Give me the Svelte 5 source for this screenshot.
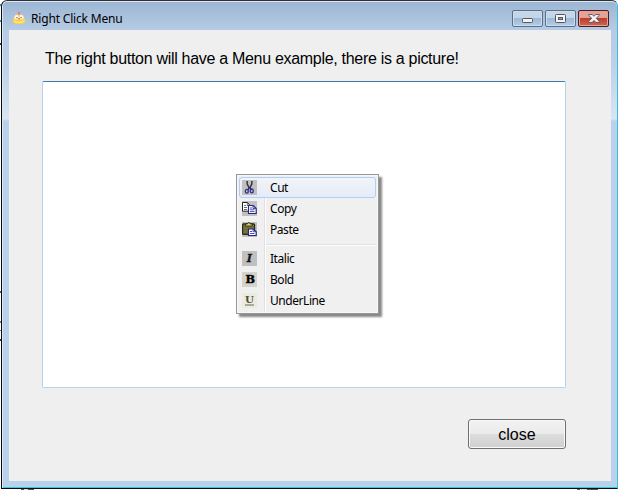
<script>
  const groups = [
    [{ label: 'Cut', icon: 'cut' }, { label: 'Copy', icon: 'copy' }, { label: 'Paste', icon: 'paste' }],
    [{ label: 'Italic', icon: 'italic' }, { label: 'Bold', icon: 'bold' }, { label: 'UnderLine', icon: 'underline' }]
  ];
  let selected = $state('Cut');
</script>

<div class="desktop">
  <div class="window">
    <header>
      <svg class="logo" width="14" height="14" viewBox="0 0 14 14">
        <path d="M.8 10C-.2 7 2 5.4 3 5C3.6 2 5.2 2.5 7 2.5S10.4 2 11 5C12 5.4 14.2 7 13.2 10Q12 12 7 12T.8 10Z" fill="#fbd052" />
        <path d="M2 8.5Q7 11 12 8.5Q12 11 7 11T2 8.5Z" fill="#ffed7c" />
        <ellipse cx="4.5" cy="5.3" rx="2.1" ry="2.3" fill="#fff8e8" />
        <ellipse cx="9.5" cy="5.3" rx="2.1" ry="2.3" fill="#fff8e8" />
        <path d="M4.3 5h1.2v1.2h-1.2zM8.5 5h1.2v1.2h-1.2z" fill="#8b6660" />
        <path d="M6.3 0h1.4v2.5h-1.4zM6 6h2l-1 2z" fill="#ef654c" />
      </svg>
      <h1>Right Click Menu</h1>
      <div class="controls">
        <button class="control" aria-label="Minimize">
          <svg class="minimize" width="11" height="5" viewBox="0 0 11 5"><rect x=".5" y=".5" width="10" height="4" rx=".8" fill="#f2f2f2" stroke="#535666" /></svg>
        </button>
        <button class="control" aria-label="Maximize">
          <svg width="11" height="9" viewBox="0 0 11 9"><rect x=".5" y=".5" width="10" height="8" rx=".8" fill="#f4f4f4" stroke="#535666" /><rect x="3.5" y="3.5" width="4" height="2" fill="#8eabc8" stroke="#535666" /></svg>
        </button>
        <button class="control exit" aria-label="Close">
          <svg width="12" height="9" viewBox="0 0 12 10" preserveAspectRatio="none"><path d="M.7.6h3.5L6 2.5 7.8.6h3.5v1L8.2 4.8l3.1 3.5v1H7.8L6 7.2 4.2 9.3H.7v-1l3.1-3.5L.7 1.6z" fill="#f5f5f5" stroke="#535666" /></svg>
        </button>
      </div>
    </header>
    <main>
      <p>The right button will have a Menu example, there is a picture!</p>
      <section class="canvas">
        <div class="menu" role="menu">
          {#each groups as group, i}
            {#if i > 0}<div class="separator"></div>{/if}
            {#each group as item}
              <button class="item" class:active={selected === item.label} role="menuitem" onclick={() => (selected = item.label)}>
                <svg class="icon" width="15" height="15" viewBox="0 0 15 15">
                  {#if item.icon === 'cut'}
                    <path d="M0 0h15v15H0z" fill="#c0c0c0" />
                    <path d="M5.2 1v3l2.3 4.5M9.8 1v3L7.5 8.5" fill="none" stroke="#373737" stroke-width="1.5" />
                    <path d="M7.5 7L6 10M7.5 7l2 3" stroke="#302e8c" stroke-width="1.6" />
                    <ellipse cx="4.8" cy="11.2" rx="1.5" ry="1.9" fill="none" stroke="#302e8c" stroke-width="1.3" />
                    <ellipse cx="9.8" cy="10.9" rx="1.5" ry="1.9" fill="none" stroke="#302e8c" stroke-width="1.3" />
                  {:else if item.icon === 'copy'}
                    <path d="M0 0h15v15H0z" fill="#c0c0c0" />
                    <path d="M.5 1.5h5l2.5 3v5.7H.5z" fill="#fff" stroke="#222" />
                    <path d="M5.3 1.5v3H8M2 4.5h2M2 6.5h3M2 8.5h3" fill="none" stroke="#444" stroke-width=".8" />
                    <path d="M6.5 4.5h4.7l3 3v5h-7.7z" fill="#fff" stroke="#26248a" stroke-width="1.2" />
                    <path d="M11 4.5v3h3M8 7h2M8 8.8h4.5M8 10.6h4.5" fill="none" stroke="#3f3d95" stroke-width=".9" />
                  {:else if item.icon === 'paste'}
                    <path d="M0 0h15v15H0z" fill="#c0c0c0" />
                    <rect x=".6" y="1.9" width="12" height="10.5" rx="1" fill="#71703e" stroke="#24240f" stroke-width="1.1" />
                    <path d="M3.5 4v-2h2L6 .7h1.6l.6 1.3h2v2z" fill="#ddd46b" stroke="#24240f" stroke-width=".8" />
                    <path d="M6.5 7h4.7l3 2.7v3.8h-7.7z" fill="#fff" stroke="#26248a" stroke-width="1.2" />
                    <path d="M11 7v2.7h3M8 9.5h2M8 11.5h4.5" fill="none" stroke="#3f3d95" stroke-width=".9" />
                  {:else if item.icon === 'italic'}
                    <path d="M0 0h15v15H0z" fill="#c0c0c0" />
                    <text x="4.7" y="11.2" font-style="italic" font-size="11" fill="#161616" stroke="#161616" stroke-width=".3">I</text>
                  {:else if item.icon === 'bold'}
                    <path d="M0 0h15v15H0z" fill="#d4d4ca" />
                    <text x="3.4" y="11.2" font-size="11" textLength="9.5" lengthAdjust="spacingAndGlyphs" stroke="#111" stroke-width=".5">B</text>
                  {:else}
                    <path d="M0 0h15v15H0z" fill="#ecebdc" />
                    <text x="3" y="10.2" font-size="10" textLength="9" lengthAdjust="spacingAndGlyphs" fill="#4b4b43">U</text>
                    <path d="M3 12h9" stroke="#68685f" />
                  {/if}
                </svg>
                <span>{item.label}</span>
              </button>
            {/each}
          {/each}
        </div>
      </section>
      <footer><button class="close">close</button></footer>
    </main>
  </div>
</div>

<style>
  :global(body) { margin: 0; overflow: hidden; }
  * { box-sizing: border-box; }
  button { margin: 0; padding: 0; font: inherit; color: #000; }
  .desktop {
    width: 618px; height: 490px; padding: 0 0 1px 1px;
    background:
      linear-gradient(90deg, transparent 21px, #555 21px 24px, #ddd 24px 28px, #555 28px 34px, transparent 34px 577px, #666 577px 580px, #ddd 580px 587px, #555 587px 598px, transparent 598px) 0 489px / 100% 1px no-repeat,
      linear-gradient(transparent 4px, #3a91b8 4px 6px, transparent 6px 20px, #3a91b8 20px 22px, transparent 22px 43px, #333 43px 45px, transparent 45px 291px, #555 291px 293px, transparent 293px 321px, #777 321px 323px, transparent 323px 330px, #777 330px 331px, transparent 331px 339px, #333 339px 341px, transparent 341px) 0 0 / 1px 100% no-repeat,
      #fff;
  }
  .window {
    height: 489px; padding: 0 6px 7px 7px; border: 1px solid #080c10; border-right: 1px solid #38bde1; border-top-color: #303039;
    border-radius: 6px 6px 0 0;
    background: linear-gradient(#9bb5d2 0, #b5cbe4 28px, #bdd1e8 65px, #d8e5f3 118px, #b9d1ea 120px, #b9d1ea 100%);
    box-shadow: inset 0 1px #dce7f2, inset 1px 0 #d8e8f5, inset 0 -1px #35c7dc;
  }
  header { height: 29px; padding: 9px 2px 0 3px; display: flex; align-items: flex-start; }
  .logo { margin-top: 2px; flex: none; }
  h1 { margin: 1px 0 0 5px; font: 12px/16px "Noto Sans", sans-serif; letter-spacing: -.18px; white-space: nowrap; }
  .controls { display: flex; gap: 2px; margin-left: auto; }
  .control { width: 31px; height: 17px; display: grid; place-items: center; border: 1px solid #58718f; border-radius: 2px; background: linear-gradient(#c5d6e7 0 43%, #9db9d6 50%, #b6cde4); box-shadow: inset 0 0 0 1px #ccdcec; }
  .minimize { margin-top: 4px; }
  .exit { border-color: #511822; background: linear-gradient(#e5a396 0 43%, #bd3e28 50%, #cf6651); box-shadow: inset 0 0 0 1px #e1a597; }
  main { height: 451px; padding: 20px 45px 32px 33px; background: #efefef; font-family: "Liberation Sans", Arial, sans-serif; }
  p { height: 31px; margin: 0 0 0 3px; font-size: 16px; line-height: 18px; letter-spacing: -.3px; white-space: nowrap; }
  .canvas { height: 307px; padding: 92px 0 0 193px; border: 1px solid #b4d3eb; border-top-color: #417aa6; border-radius: 2px; background: #fff; }
  .menu { width: 143px; height: 140px; padding: 2px; border: 1px solid #979797; background: linear-gradient(90deg, transparent 27px, #e0e0e0 27px 28px, #fff 28px 29px, transparent 29px), #f0f0f0; box-shadow: inset 0 0 0 1px #f7f7f7, 3px 3px 2px #888; font: 12px/16px "Noto Sans", sans-serif; }
  .item { width: 137px; height: 21px; padding: 0 0 0 2px; display: flex; align-items: center; border: 1px solid transparent; border-radius: 3px; background: transparent; text-align: left; letter-spacing: -.45px; }
  .item.active { border-color: #aecff7; background: linear-gradient(#f2f4f7, #e5ebf7); }
  .item span { margin-left: 13px; }
  .icon { flex: none; font-family: "DejaVu Serif", serif; font-weight: bold; letter-spacing: 0; }
  .separator { height: 8px; margin: 0 0 0 27px; background: linear-gradient(transparent 4px, #e0e0e0 4px 5px, #fff 5px 6px, transparent 6px); }
  footer { display: flex; justify-content: flex-end; padding-top: 31px; }
  .close { width: 98px; height: 30px; padding-top: 1px; border: 1px solid #707070; border-radius: 3px; background: linear-gradient(#f2f2f2 0, #ebebeb 48%, #dddddd 50%, #cfcfcf); box-shadow: inset 0 0 0 1px #f8f8f8; font-size: 16px; line-height: 28px; }
</style>
